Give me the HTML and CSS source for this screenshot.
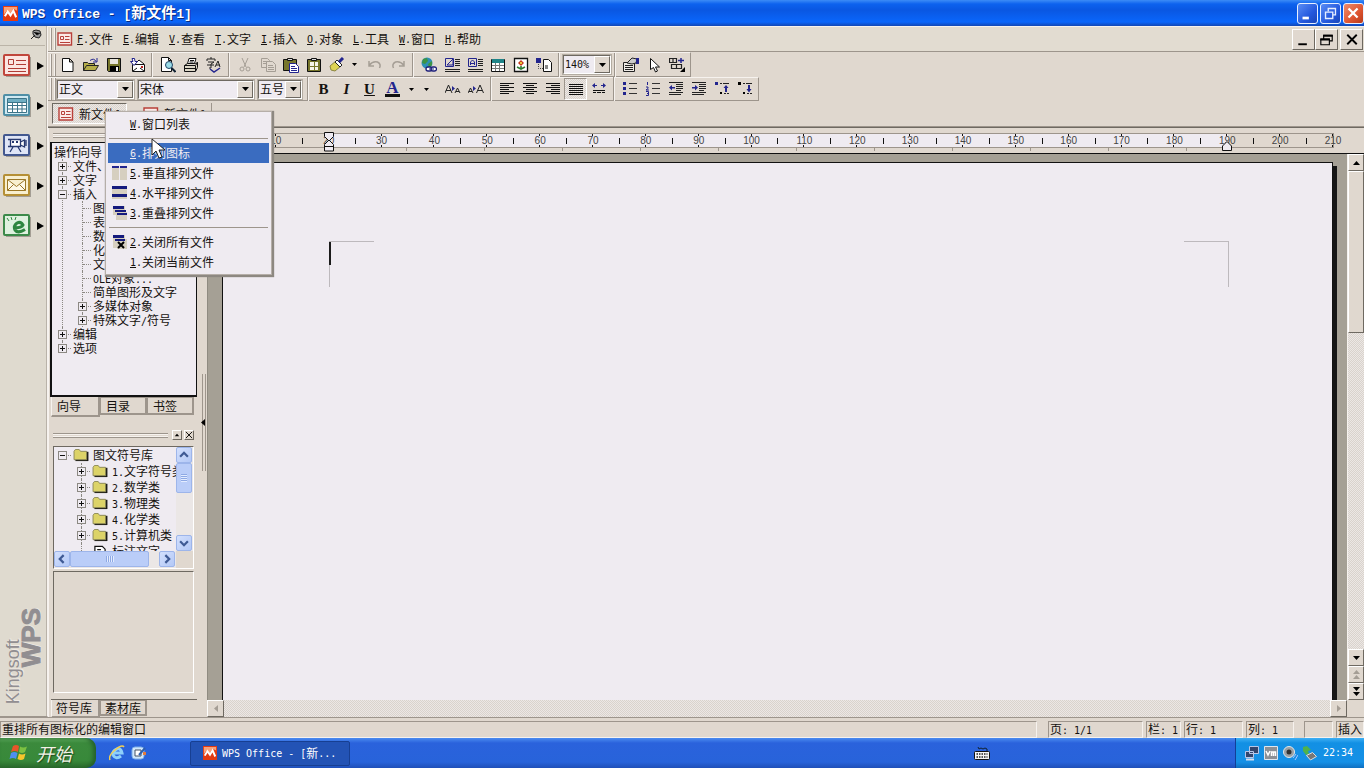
FILE: index.html
```html
<!DOCTYPE html>
<html lang="zh-CN">
<head>
<meta charset="utf-8">
<title>WPS Office - [新文件1]</title>
<link rel="stylesheet" href="styles.css">
</head>
<body>
<svg class="defs" aria-hidden="true">
  <symbol id="doc" viewBox="0 0 16 14"><path fill="#fbe9e6" stroke="#b8403a" stroke-width="1.4" d="M1 1h13.5v12H1z"/><path fill="none" stroke="#b8403a" d="M3.5 4.5h3v3h-3zM8 4.5h4.500M8 7.500h4.500M3 10.500h10"/></symbol>
  <symbol id="wps" viewBox="0 0 16 16"><path fill="#e33a12" d="M0 0h16v16H0z"/><path fill="#f9a27a" d="M1 1h14v4L11 3 7 9 4 5 1 9z"/><path fill="none" stroke="#fff" stroke-width="2.200" d="M2 11l3-5 3 4 3-5 3 7"/></symbol>
  <symbol id="down" viewBox="0 0 7 4"><path d="M0 0h7L3.500 4z"/></symbol>
  <symbol id="folder" viewBox="0 0 16 14"><path fill="#1a1a16" d="M2 3h14v10H2z"/><path fill="#dcd368" stroke="#8a8757" d="M.5 11.500v-9l1.500-2h4l1.500 2h6.500v9z"/></symbol>
  <symbol id="fly" viewBox="0 0 7 8"><path d="M0 0l7 4-7 4z"/></symbol>
</svg>

<header class="titlebar">
  <svg class="logo"><use href="#wps"/></svg>
  <h1><span class="la">WPS Office - [</span>新文件<span class="la">1]</span></h1>
  <div class="winbtns">
    <button aria-label="最小化"><svg viewBox="0 0 21 21"><path fill="#fff" d="M5 14h7v3H5z"/></svg></button>
    <button aria-label="还原"><svg viewBox="0 0 21 21"><path fill="none" stroke="#e6eeff" stroke-width="1.500" d="M8 8V5h8v7h-3M5 9h8v7H5z"/></svg></button>
    <button class="close" aria-label="关闭"><svg viewBox="0 0 21 21"><path stroke="#fff" stroke-width="2.500" d="M5 5l10 10M15 5L5 15"/></svg></button>
  </div>
</header>

<div class="shell">
  <aside class="rail">
    <button class="pin" aria-label="固定"><svg width="12" height="12" viewBox="0 0 12 12"><path fill="#999" stroke="#222" d="M3 2l3-1 4 1 1 4-2 3-4-1-2-3z"/><path stroke="#222" d="M5 6l-4 4M4 3l3 3 3-2"/></svg></button>
    <button class="railbtn" aria-label="文字"><svg viewBox="0 0 29 24"><path class="sh" d="M3 3h25v20H3z"/><rect x="1" y="1" width="25" height="20" rx="1" fill="#fbe6e2" stroke="#c0463c" stroke-width="2"/><path fill="none" stroke="#b03c36" d="M5.500 5.500h5v5h-5zM13 6.500h10M13 10.500h10M5 14.500h18M5 17.500h18"/></svg><svg class="fly"><use href="#fly"/></svg></button>
    <button class="railbtn" aria-label="表格"><svg viewBox="0 0 29 24"><path class="sh" d="M3 3h25v20H3z"/><rect x="1" y="1" width="25" height="20" rx="1" fill="#cfe9f2" stroke="#4f8fa6" stroke-width="2"/><path fill="#fff" stroke="#3c7488" d="M4.500 4.500h19v14h-19zM4 8.500h20M4 11.500h20M4 15h20M9.500 8v10M14.500 8v10M19 8v10"/><path fill="#6faec2" d="M5 5h18v3H5z"/></svg><svg class="fly"><use href="#fly"/></svg></button>
    <button class="railbtn" aria-label="演示"><svg viewBox="0 0 29 24"><path class="sh" d="M3 3h25v20H3z"/><rect x="1" y="1" width="25" height="20" rx="1" fill="#dfe5f6" stroke="#43588f" stroke-width="2"/><path fill="#fff" stroke="#27396f" stroke-width="1.300" d="M7.500 5.500h10v7h-10zM17.500 8l4-2v7l-4-2M10 13l-3 5M15 13l3 5M23 6v6M5 5.500h2M5 12.500h2"/><path fill="#27396f" d="M9 7h2v2H9zM13 7h2v2h-2z"/></svg><svg class="fly"><use href="#fly"/></svg></button>
    <button class="railbtn" aria-label="邮件"><svg viewBox="0 0 29 24"><path class="sh" d="M3 3h25v20H3z"/><rect x="1" y="1" width="25" height="20" rx="1" fill="#f8efcf" stroke="#b58f35" stroke-width="2"/><path fill="#fdf8e6" stroke="#9a7626" d="M4.500 5.500h18v11h-18zl9 7 9-7M4.500 16.500l6-6M22.500 16.500l-6-6"/></svg><svg class="fly"><use href="#fly"/></svg></button>
    <button class="railbtn" aria-label="浏览器"><svg viewBox="0 0 29 24"><path class="sh" d="M3 3h25v20H3z"/><rect x="1" y="1" width="25" height="20" rx="1" fill="#dff1df" stroke="#3c8a4a" stroke-width="2"/><path fill="none" stroke="#2e8640" stroke-width="3" d="M10 14q9 0 10-3-2-4-6-2-4 3-2 7 3 4 10-.500"/><path stroke="#2e8640" d="M4 4l2 3M8 3l1 3M13 3l-1 3"/></svg><svg class="fly"><use href="#fly"/></svg></button>
    <div class="brand"><span>Kingsoft</span><b>WPS</b></div>
  </aside>

  <div class="main">
    <nav class="menubar">
      <i class="grip"></i>
      <svg class="docicon"><use href="#doc"/></svg>
      <button><span class="l"><u>F</u>.</span>文件</button><button><span class="l"><u>E</u>.</span>编辑</button><button><span class="l"><u>V</u>.</span>查看</button><button><span class="l"><u>T</u>.</span>文字</button><button><span class="l"><u>I</u>.</span>插入</button><button><span class="l"><u>O</u>.</span>对象</button><button><span class="l"><u>L</u>.</span>工具</button><button><span class="l"><u>W</u>.</span>窗口</button><button><span class="l"><u>H</u>.</span>帮助</button>
      <div class="mdi">
        <button aria-label="最小化文档"><svg viewBox="0 0 20 20"><path d="M4 14h9v2H4z"/></svg></button><button aria-label="还原文档"><svg viewBox="0 0 20 20"><path fill="none" stroke="#000" stroke-width="1.200" d="M6.500 9V5.500h9v6H13M3.500 9.500h9v6h-9z"/><path d="M6 5h10v2H6zM3 9h10v2H3z"/></svg></button><button class="last" aria-label="关闭文档"><svg viewBox="0 0 20 20"><path stroke="#000" stroke-width="2" d="M5 5l10 10M15 5L5 15"/></svg></button>
      </div>
    </nav>

    <div class="bar">
      <i class="grip"></i>
      <button class="tb" aria-label="新建"><svg viewBox="0 0 16 16"><path fill="#fff" stroke="#111" d="M2.500 1.500h7l3.500 3.500v9.500H2.500zM9.500 1.500V5H13"/></svg></button>
      <button class="tb" aria-label="打开"><svg viewBox="0 0 16 16"><path fill="#b5ad48" stroke="#222" d="M.5 13.500v-8h4l1 1h6v2M.5 13.500l3-5h12l-3 5z"/><path fill="none" stroke="#23258e" d="M7 3.500q4-3 6 1M14 1v4h-4"/></svg></button>
      <button class="tb" aria-label="保存"><svg viewBox="0 0 16 16"><path fill="#77762b" stroke="#111" d="M1.500 1.500h13v13H2.500l-1-1z"/><path fill="#e8e4dc" d="M4 2h8v5H4z"/><path d="M4 9h9v5H4z"/><path fill="#eee" d="M10 10h2v4h-2z"/></svg></button>
      <button class="tb" aria-label="发送"><svg viewBox="0 0 16 16"><path fill="#fff" stroke="#111" d="M3.500 7.500h12v7h-12zM4 14l4-3M15 14l-4-3M6 7l4-4 5 4"/><path fill="#fff" stroke="#23258e" d="M3 1.500l1 3H1.500L5 8.500l3.500-4H6l-.500-3z"/><path fill="#b22" d="M12 9h2v2h-2z"/></svg></button>
      <i class="sep"></i>
      <button class="tb" aria-label="打印预览"><svg viewBox="0 0 16 16"><path fill="#fff" stroke="#111" d="M1.500.5h7l3 3v11h-10zM8.500.5v3h3"/><circle cx="9" cy="8" r="3.500" fill="#9adbe6" stroke="#246"/><path stroke="#123" stroke-width="2" d="M11.500 11l4 4"/></svg></button>
      <button class="tb" aria-label="打印"><svg viewBox="0 0 16 16"><path fill="#ddd8c8" stroke="#111" d="M1.500 8.500l3-2h8l2-1v5l-2 4h-11zM1.500 8.500h11l2-3M12.500 9v5"/><path fill="#fff" stroke="#111" d="M4.500 6.500l1.500-5h7l-1.500 5zM7 3.500h4M6.500 5h4"/><path stroke="#111" d="M2 11.500h10"/></svg></button>
      <button class="tb" aria-label="拼写检查"><svg viewBox="0 0 16 16"><path fill="none" stroke="#222" d="M1 4V2h8v2M5 0v2M2 5h6L5 7v4H3M1 8h7M9 10l3-6 2 6M10 8h4"/><path fill="none" stroke="#23258e" stroke-width="1.500" d="M4 12l4 3 6-4"/></svg></button>
      <i class="sep"></i>
      <button class="tb off" aria-label="剪切"><svg viewBox="0 0 16 16"><path fill="none" stroke="currentColor" d="M5 1l4 9M11 1L7 10"/><circle cx="5" cy="12" r="2" fill="none" stroke="currentColor"/><circle cx="11" cy="12" r="2" fill="none" stroke="currentColor"/></svg></button>
      <button class="tb off" aria-label="复制"><svg viewBox="0 0 16 16"><path fill="none" stroke="currentColor" d="M1.500 1.500h6l2 2v7h-8zM3 4.500h5M3 6.500h5"/><path fill="#e0d8cf" stroke="currentColor" d="M6.500 4.500h6l3 3v7h-9zM8 8.500h5M8 10.500h6M8 12.500h6"/></svg></button>
      <button class="tb" aria-label="粘贴"><svg viewBox="0 0 16 16"><path fill="#77762b" stroke="#111" d="M.5 2.500h13v11H.5z"/><path fill="#ddd" stroke="#111" d="M4.500 3.500v-2h5v2z"/><path fill="#fff" stroke="#23258e" d="M6.500 6.500h6l3 3v6h-9zM8 9.500h4M8 11.500h6M8 13.500h6"/></svg></button>
      <button class="tb" aria-label="选择性粘贴"><svg viewBox="0 0 16 16"><path fill="#77762b" stroke="#111" d="M1.500 2.500h13v12h-13z"/><path fill="#f6f3ea" d="M4 5h4v4H4zM9 5h3v4H9zM4 10h4v3H4zM9 10h3v3H9z"/><path fill="#ddd" stroke="#111" d="M5.500 1.500h5v2h-5z"/></svg></button>
      <button class="tb" aria-label="格式刷"><svg viewBox="0 0 16 16"><path fill="#ded354" stroke="#8a8440" d="M1 9l6-5 5 5-6 5-4-1z"/><path fill="#fff" stroke="#222" d="M6 5l2-2 5 5-2 2z"/><path stroke="#23258e" stroke-width="3" d="M10 5l4-4"/></svg></button>
      <button class="dd" aria-label="更多"><svg><use href="#down"/></svg></button>
      <button class="tb off gap" aria-label="撤销"><svg viewBox="0 0 16 16"><path fill="none" stroke="currentColor" stroke-width="1.500" d="M2 4v5h5M2.500 8q3-4 8-3 4 2 2 6"/></svg></button>
      <button class="tb off" aria-label="重做"><svg viewBox="0 0 16 16"><path fill="none" stroke="currentColor" stroke-width="1.500" d="M14 4v5H9M13.500 8q-3-4-8-3-4 2-2 6"/></svg></button>
      <i class="sep"></i>
      <button class="tb" aria-label="超链接"><svg viewBox="0 0 16 16"><circle cx="6" cy="6" r="5.500" fill="#2d8fb6"/><path fill="#3d9442" d="M2 2l4-1 1 3-3 3-3-1zM7 7l4-3v4l-3 3z"/><rect x="5" y="10" width="6" height="4" rx="2" fill="#fff" stroke="#1b1d78" stroke-width="1.300"/><rect x="10" y="10" width="5.500" height="4" rx="2" fill="#fff" stroke="#1b1d78" stroke-width="1.300"/><path stroke="#1b1d78" d="M8 12h5"/></svg></button>
      <button class="tb" aria-label="图文框"><svg viewBox="0 0 16 16"><path stroke="#222" d="M11 2.500h5M11 4.500h5M11 6.500h5M11 8.500h5M1 12.500h15M1 14.500h15"/><path fill="none" stroke="#23258e" d="M1.500 1.500h8v8h-8zM3 8l6-6v6z"/></svg></button>
      <button class="tb" aria-label="文字框"><svg viewBox="0 0 16 16"><path stroke="#222" d="M11 2.500h5M11 4.500h5M11 6.500h5M11 8.500h5M1 12.500h15M1 14.500h15"/><path fill="none" stroke="#23258e" d="M1.500 1.500h8v8h-8zM3.500 8V5l2-2 2 2v3M4 6.500h3"/></svg></button>
      <button class="tb" aria-label="插入表格"><svg viewBox="0 0 16 16"><path fill="#fff" stroke="#111" d="M1.500 2.500h13v12h-13z"/><path fill="#1f8488" d="M2 2h12v4H2z"/><path stroke="#777" d="M2 8.500h12M2 11.500h12M5.500 6v8M9.500 6v8"/></svg></button>
      <button class="tb" aria-label="插入图片"><svg viewBox="0 0 16 16"><path fill="#fff" stroke="#111" stroke-width="1.300" d="M1.500 1.500h13v13h-13z"/><path fill="#c53a1c" d="M8 3l3 3-3 3-3-3z"/><path stroke="#2f7c34" stroke-width="1.600" fill="none" d="M4 10l4 2 4-2M8 9v4"/><path fill="#e8c43a" d="M7 5h2v2H7z"/></svg></button>
      <button class="tb" aria-label="插入对象"><svg viewBox="0 0 16 16"><path fill="#23258e" d="M0 1h5v5H0z"/><path fill="#fff" stroke="#111" d="M7.500 2.500h5l3 3v9h-8z"/><path fill="none" stroke="#444" stroke-dasharray="1 1" d="M2.500 7v4.500H7"/><path fill="#888" d="M9 8h3v4H9z"/></svg></button>
      <i class="sep"></i>
      <label class="combo zoomsel"><select aria-label="显示比例"><option>140%</option></select><span><svg><use href="#down"/></svg></span></label>
      <i class="sep"></i>
      <button class="tb" aria-label="属性"><svg viewBox="0 0 16 16"><path fill="#efebe6" stroke="#222" d="M.5 5.500h11v9H.5zM2 8.500h8M2 10.500h8M2 12.500h8"/><path fill="#ccc" stroke="#222" d="M4 6l5-5 5 1-1 4-4 1z"/><path fill="#23258e" d="M13 1h3v6h-3z"/></svg></button>
      <button class="tb" aria-label="选择"><svg viewBox="0 0 16 16"><path fill="#fff" stroke="#111" d="M4.500 1.500v11l3-2 2 4.500 2-1-2-4h4z"/></svg></button>
      <button class="tb" aria-label="组合"><svg viewBox="0 0 16 16"><path fill="none" stroke="#222" stroke-width="1.200" d="M.5 1.500h7v4h-7zM2.500 7.500h10v4h-10zM4 1.500v4M7.500 7.500v4"/><path stroke="#23258e" stroke-width="1.500" d="M9 3.500h6M12 1v5"/><path d="M16 10v5h-5z"/></svg></button>
    </div>

    <div class="bar">
      <i class="grip"></i>
      <label class="combo style"><select aria-label="样式"><option>正文</option></select><span><svg><use href="#down"/></svg></span></label>
      <label class="combo font"><select aria-label="字体"><option>宋体</option></select><span><svg><use href="#down"/></svg></span></label>
      <label class="combo size"><select aria-label="字号"><option>五号</option></select><span><svg><use href="#down"/></svg></span></label>
      <i class="sep"></i>
      <button class="tb glyph"><b>B</b></button>
      <button class="tb glyph"><b><em>I</em></b></button>
      <button class="tb glyph"><b><u>U</u></b></button>
      <button class="tb glyph ink"><b>A</b></button>
      <button class="dd wide" aria-label="字体颜色"><svg><use href="#down"/></svg></button>
      <button class="dd wide" aria-label="更多格式"><svg><use href="#down"/></svg></button>
      <button class="tb gap2" aria-label="缩小字体"><svg viewBox="0 0 16 16"><path fill="none" stroke="#222" d="M0 12l3.500-8L7 12M1 9.500h5M10 12l2.500-5 2.500 5M11 10.500h3"/><path fill="#23258e" d="M7 5l3 2.500L7 10z"/></svg></button>
      <button class="tb" aria-label="放大字体"><svg viewBox="0 0 16 16"><path fill="none" stroke="#222" d="M0 12l2.500-5L5 12M1 10.500h3M8.500 12L12 4l3.500 8M10 9.500h4"/><path fill="#23258e" d="M5 5l3 2.500L5 10z"/></svg></button>
      <i class="sep"></i>
      <button class="tb" aria-label="左对齐"><svg viewBox="0 0 16 16"><path stroke="#111" d="M1 2.500h14M1 4.500h9M1 6.500h14M1 8.500h9M1 10.500h14M1 12.500h9"/></svg></button>
      <button class="tb" aria-label="居中"><svg viewBox="0 0 16 16"><path stroke="#111" d="M1 2.500h14M4 4.500h8M1 6.500h14M4 8.500h8M1 10.500h14M4 12.500h8"/></svg></button>
      <button class="tb" aria-label="右对齐"><svg viewBox="0 0 16 16"><path stroke="#111" d="M1 2.500h14M6 4.500h9M1 6.500h14M6 8.500h9M1 10.500h14M6 12.500h9"/></svg></button>
      <button class="tb pressed" aria-label="两端对齐"><svg viewBox="0 0 16 16"><path stroke="#111" d="M1 3.500h14M1 5.500h14M1 7.500h14M1 9.500h14M1 11.500h14M1 13.500h14"/></svg></button>
      <button class="tb" aria-label="分散对齐"><svg viewBox="0 0 16 16"><path stroke="#111" d="M2 9.500h12M2 11.500h3M6 11.500h4M11 11.500h3"/><path fill="#23258e" d="M1 4.500L4 2v2h2v1H4v2zM15 4.500L12 2v2h-2v1h2v2z"/></svg></button>
      <i class="sep"></i>
      <button class="tb" aria-label="项目符号"><svg viewBox="0 0 16 16"><path fill="#23258e" d="M1 1h3v3H1zM1 6h3v3H1zM1 11h3v3H1z"/><path stroke="#333" d="M7 2.500h8M7 7.500h8M7 12.500h8"/></svg></button>
      <button class="tb" aria-label="编号"><svg viewBox="0 0 16 16"><path fill="none" stroke="#23258e" d="M2.500 1v3M1 6h2v1.500L1 9h3M1 10.500h2.500v4H1M2 12.500h1"/><path stroke="#333" d="M7 2.500h8M7 7.500h8M7 12.500h8"/></svg></button>
      <button class="tb" aria-label="减少缩进"><svg viewBox="0 0 16 16"><path stroke="#222" d="M1 1.500h14M8 3.500h7M8 5.500h7M8 7.500h7M8 9.500h5M1 11.500h14M1 13.500h12"/><path fill="#23258e" d="M1 6.500L4 4v2h3v1.500H4v2z"/></svg></button>
      <button class="tb" aria-label="增加缩进"><svg viewBox="0 0 16 16"><path stroke="#222" d="M1 1.500h14M8 3.500h7M8 5.500h7M8 7.500h7M8 9.500h5M1 11.500h14M1 13.500h12"/><path fill="#23258e" d="M7 6.500L4 4v2H1v1.500h3v2z"/></svg></button>
      <button class="tb" aria-label="升级"><svg viewBox="0 0 16 16"><path fill="#23258e" d="M1 1h3v3H1zM12 4l2.500 3H13v4h-2V7H9.500z"/><path stroke="#222" d="M6 2.500h9M10 12.500h5" stroke-dasharray="2 1 9"/><path d="M6 11h2v2H6z"/></svg></button>
      <button class="tb" aria-label="降级"><svg viewBox="0 0 16 16"><path d="M1 1h3v3H1zM6 11h2v2H6z"/><path fill="#23258e" d="M12 11.500L14.500 8H13V4h-2v4H9.500z"/><path stroke="#222" d="M6 2.500h9M10 12.500h5" stroke-dasharray="2 1 9"/></svg></button>
    </div>

    <div class="doctabs">
      <button class="doctab on"><svg class="docicon"><use href="#doc"/></svg>新文件<span class="l">1</span></button>
      <button class="doctab"><svg class="docicon"><use href="#doc"/></svg>新文件<span class="l">1</span></button>
      <div class="popup" role="menu">
        <button role="menuitem"><i></i><span class="l"><u>W</u>.</span>窗口列表</button>
        <hr>
        <button role="menuitem" class="hot"><i></i><span class="l"><u>6</u>.</span>排列图标</button>
        <button role="menuitem"><i><svg viewBox="0 0 16 16"><path fill="#d6cfc0" d="M0 1h7v14H0zM8 1h7v14H8z"/><path fill="#23258e" d="M0 1h7v2H0zM8 1h7v2H8z"/></svg></i><span class="l"><u>5</u>.</span>垂直排列文件</button>
        <button role="menuitem"><i><svg viewBox="0 0 16 16"><path fill="#d6cfc0" d="M0 1h15v13H0z"/><path fill="#151b7e" d="M0 1h15v3H0zM0 9h15v3H0z"/></svg></i><span class="l"><u>4</u>.</span>水平排列文件</button>
        <button role="menuitem"><i><svg viewBox="0 0 16 16"><path fill="#d6cfc0" d="M1 1h12v9H1zM4 7h11v8H4z"/><path fill="#151b7e" d="M1 1h11v3H1zM3 5h11v2H3zM5 8h10v2H5z"/></svg></i><span class="l"><u>3</u>.</span>重叠排列文件</button>
        <hr>
        <button role="menuitem"><i><svg viewBox="0 0 16 16"><path fill="#d6cfc0" d="M1 1h12v13H1zM5 5h10v10H5z"/><path fill="#151b7e" d="M1 1h11v3H1zM3 5h10v2H3z"/><path stroke="#000" stroke-width="2" d="M6 8l6 6M12 8l-6 6"/></svg></i><span class="l"><u>2</u>.</span>关闭所有文件</button>
        <button role="menuitem"><i></i><span class="l"><u>1</u>.</span>关闭当前文件</button>
        <svg class="cursor" viewBox="0 0 14 22"><path fill="#fff" stroke="#222" d="M1 1v16l4-4 3 7 3-1-3-7h6z"/></svg>
      </div>
    </div>

    <div class="work">
      <section class="side">
        <div class="ridge"></div>
        <div class="guide">
          <h2>操作向导</h2>
          <ul class="tree">
            <li><i class="pm"></i>文件、</li>
            <li><i class="pm"></i>文字</li>
            <li><i class="pm open"></i>插入
              <ul>
                <li class="leaf">图</li><li class="leaf">表</li><li class="leaf">数</li><li class="leaf">化</li><li class="leaf">文</li>
                <li class="leaf"><span class="l">OLE</span>对象<span class="l">...</span></li>
                <li class="leaf">简单图形及文字</li>
                <li><i class="pm"></i>多媒体对象</li>
                <li><i class="pm"></i>特殊文字<span class="l">/</span>符号</li>
              </ul>
            </li>
            <li><i class="pm"></i>编辑</li>
            <li><i class="pm"></i>选项</li>
          </ul>
        </div>
        <div class="tabs"><button class="on">向导</button><button>目录</button><button>书签</button></div>
        <div class="panelhead"><div class="ridge"></div><button aria-label="收起"><svg viewBox="0 0 9 9"><path d="M2 6h5L4.500 3z"/></svg></button><button aria-label="关闭面板"><svg viewBox="0 0 9 9"><path stroke="#000" d="M1 1l7 7M8 1L1 8"/></svg></button></div>
        <div class="library">
          <ul class="tree big">
            <li><i class="pm open"></i><svg><use href="#folder"/></svg>图文符号库
              <ul>
                <li><i class="pm"></i><svg><use href="#folder"/></svg><span class="l">1.</span>文字符号类</li>
                <li><i class="pm"></i><svg><use href="#folder"/></svg><span class="l">2.</span>数学类</li>
                <li><i class="pm"></i><svg><use href="#folder"/></svg><span class="l">3.</span>物理类</li>
                <li><i class="pm"></i><svg><use href="#folder"/></svg><span class="l">4.</span>化学类</li>
                <li><i class="pm"></i><svg><use href="#folder"/></svg><span class="l">5.</span>计算机类</li>
                <li class="page-item"><svg viewBox="0 0 16 14"><path fill="#fff" stroke="#111" stroke-width="1.300" d="M2.500 1.500h8l3 3V14h-11zM5 5h4M5 8h6"/></svg>标注文字</li>
              </ul>
            </li>
          </ul>
          <div class="xpv"><button aria-label="向上"><svg viewBox="0 0 9 9"><path d="M1 6l3.500-3.500L8 6"/></svg></button><span class="thumb"></span><i></i><button aria-label="向下"><svg viewBox="0 0 9 9"><path d="M1 3l3.500 3.500L8 3"/></svg></button></div>
          <div class="xph"><button aria-label="向左"><svg viewBox="0 0 9 9"><path d="M6 1L2.500 4.500 6 8"/></svg></button><span class="thumb"></span><i></i><button aria-label="向右"><svg viewBox="0 0 9 9"><path d="M3 1l3.500 3.500L3 8"/></svg></button></div>
        </div>
        <div class="preview"></div>
        <div class="tabs low"><button class="on">符号库</button><button>素材库</button></div>
      </section>
      <div class="splitter"><span><svg viewBox="0 0 4 7"><path d="M4 0v7L0 3.500z"/></svg></span></div>

      <section class="editor">
        <div class="rulerbox">
          <ol class="ruler">
            <li><span>10</span></li><li class="in"><span>20</span><svg class="mark" viewBox="0 0 10 22"><path fill="#efebf1" stroke="#111" d="M.5 1.500v4L5 10l4.500-4.500v-4zM5 9L.5 13.500V20h9v-6.500zM.5 15.500h9"/></svg></li><li><span>30</span></li><li><span>40</span></li><li><span>50</span></li><li><span>60</span></li><li><span>70</span></li><li><span>80</span></li><li><span>90</span></li><li><span>100</span></li><li><span>110</span></li><li><span>120</span></li><li><span>130</span></li><li><span>140</span></li><li><span>150</span></li><li><span>160</span></li><li><span>170</span></li><li><span>180</span></li><li><span>190</span><svg class="mark" viewBox="0 0 10 22"><path fill="#efebf1" stroke="#111" d="M5 10.500L.5 15v4.500h9V15z"/></svg></li><li><span>200</span></li><li><span>210</span></li>
          </ol>
          <div class="stops"></div>
        </div>
        <div class="canvas">
          <div class="sheet"><div class="corner tl"><span class="caret"></span></div><div class="corner tr"></div></div>
        </div>
        <div class="vscroll">
          <button aria-label="上滚"><svg viewBox="0 0 7 4"><path d="M0 4h7L3.500 0z"/></svg></button><span class="thumb"></span><i></i>
          <button aria-label="下滚"><svg viewBox="0 0 7 4"><path d="M0 0h7L3.500 4z"/></svg></button>
          <button class="off" aria-label="上一页"><svg class="dbl" viewBox="0 0 7 9"><path d="M0 4h7L3.500 0zM0 9h7L3.500 5z"/></svg></button>
          <button aria-label="下一页"><svg class="dbl" viewBox="0 0 7 9"><path d="M0 0h7L3.500 4zM0 5h7L3.500 9z"/></svg></button>
        </div>
        <div class="hscroll"><button aria-label="左滚"><svg viewBox="0 0 4 7"><path d="M4 0v7L0 3.500z"/></svg></button><button aria-label="右滚"><svg viewBox="0 0 4 7"><path d="M0 0v7l4-3.500z"/></svg></button></div>
      </section>
    </div>
  </div>
</div>

<footer class="status">
  <span class="msg">重排所有图标化的编辑窗口</span>
  <span class="s1">页<span class="l">: 1/1</span></span><span class="s2">栏<span class="l">: 1</span></span><span class="s3">行<span class="l">: 1</span></span><span class="s4">列<span class="l">: 1</span></span><span class="s5"></span><span class="s6">插入</span>
</footer>

<div class="taskbar">
  <button class="start"><svg viewBox="0 0 20 20"><path fill="#e8562a" d="M4 3q3-2 6 0L9 9Q6 7 2 9z"/><path fill="#7cc142" d="M11 3.500q3 2 7 0L16 9q-3 2-6 0z"/><path fill="#4f8ff0" d="M2 10q3-2 6.500 0L7 16q-3-2-6.500 0z"/><path fill="#f6c62c" d="M10 10.500q3 2 6.500 0L15 16q-3 2-6.500 0z"/></svg>开始</button>
  <div class="quick">
    <a href="#" aria-label="Internet Explorer"><svg viewBox="0 0 16 16"><path fill="none" stroke="#8ed0fa" stroke-width="3" d="M4 8h9q-1-5-5-4-5 2-4 6 3 5 8 1"/><path fill="none" stroke="#f1cf55" stroke-width="1.500" d="M1 15Q-1 11 6 5t9-3"/></svg></a>
    <a href="#" aria-label="显示桌面"><svg viewBox="0 0 16 16"><rect x="1" y="2" width="12" height="12" rx="3" fill="#cfe6fb" stroke="#7fb0e8"/><path fill="#fff" stroke="#456" d="M4 5h6v6H4z"/><path stroke="#2d5fae" stroke-width="2" d="M8 10l6-7"/><path fill="#e37b3c" d="M12 7h3v3h-3z"/></svg></a>
  </div>
  <button class="task"><svg><use href="#wps"/></svg><span class="l">WPS Office - [</span>新<span class="l">...</span></button>
  <svg class="kbd" viewBox="0 0 16 14"><path fill="none" stroke="#123" d="M4 1l1 2 2-1 2 1 2-1 2 1v2"/><rect x=".5" y="5.500" width="15" height="8" rx="1" fill="#f4f4f4" stroke="#111"/><path stroke="#222" stroke-width="1.500" stroke-dasharray="1.500 1" d="M2.500 8h11M2.500 11h11"/></svg>
  <div class="tray">
    <svg viewBox="0 0 16 16"><path fill="#33456d" stroke="#b7c6e8" d="M5.500 1.500h9v7h-9zM1.500 6.500h8v6h-8z"/><path stroke="#d6dcec" stroke-width="2" d="M2 14.500h8"/></svg>
    <svg viewBox="0 0 16 16"><path fill="#8c9096" stroke="#dfe6ee" d="M1.500 1.500h13v13h-13z"/><path fill="none" stroke="#fff" stroke-width="1.500" d="M3 6l2 4 2-4M8.500 11V7h4v4M10.500 7v4"/></svg>
    <svg viewBox="0 0 16 16"><circle cx="7" cy="7" r="5.500" fill="#9aa0a4" stroke="#e4e8ea"/><circle cx="7" cy="7" r="2.500" fill="#333"/><path fill="none" stroke="#a9c5ff" d="M11 13l3-4M13 15l3-5"/></svg>
    <svg viewBox="0 0 16 16"><path fill="#4fb24b" d="M2 2l4-1 4 4-3 1 1 3-3 1-3-4z"/><path fill="#777" stroke="#ddd" d="M5.500 10.500l6-3 4 4-6 3.500z"/></svg>
    <time class="l">22:34</time>
  </div>
</div>
</body>
</html>
```

FILE: styles.css
```css
:root {
  --face: #e0d8cf;
  --lite: #f6f2ee;
  --dark: #9d958c;
  --deep: #6e6961;
  --paper: #efebf1;
  --canvas: #a5a095;
  --dither: repeating-conic-gradient(#d9d3cc 0 25%, #ece7e5 0 50%) 0 0 / 2px 2px;
}
* { box-sizing: border-box; }
body {
  margin: 0;
  height: 100vh;
  display: flex;
  flex-direction: column;
  overflow: hidden;
  background: var(--face);
  color: #15120f;
  font: 12px/14px "Noto Sans CJK SC", sans-serif;
}
button, select { font: inherit; color: inherit; background: none; border: 0; padding: 0; margin: 0; }
button { display: flex; align-items: center; white-space: nowrap; }
svg { display: block; flex: none; }
ul, ol { list-style: none; margin: 0; padding: 0; }
i { font-style: normal; }
.defs { position: absolute; width: 0; height: 0; }
.l { font: 10px/10px "DejaVu Sans Mono", monospace; white-space: pre; }
button > .l { padding-top: 2px; }

/* title bar */
.titlebar {
  flex: none;
  height: 26px;
  display: flex;
  align-items: center;
  padding: 0 0 0 3px;
  background: linear-gradient(#3c8cf6, #0d62ee 4px, #0a57e2 10px, #0a66fb 22px, #1347b4);
}
.logo { width: 15px; height: 15px; }
.titlebar h1 {
  margin: 0 0 0 4px;
  font-size: 15px;
  line-height: 20px;
  font-weight: bold;
  color: #fff;
  text-shadow: 1px 1px #0a2a80;
  white-space: pre;
}
.la { font-family: "Liberation Mono", monospace; font-size: 13px; }
.winbtns { display: flex; gap: 2px; margin-left: auto; }
.winbtns button {
  width: 21px;
  height: 21px;
  border: 1px solid #e8f0ff;
  border-radius: 3px;
  background: linear-gradient(135deg, #5a8df5, #2458dd 60%, #1a46b8);
}
.winbtns .close { background: linear-gradient(135deg, #ee8c6c, #de5430 60%, #b83a18); }
.winbtns svg { width: 19px; height: 19px; }

.shell { flex: 1; min-height: 0; display: flex; }

/* launcher rail */
.rail {
  width: 48px;
  flex: none;
  display: flex;
  flex-direction: column;
  background: #dfdacf;
  border-right: 1px solid var(--lite);
  border-bottom: 1px solid var(--dark);
  box-shadow: inset -1px 0 #b9b2a8;
}
.pin { height: 20px; flex: none; justify-content: flex-end; margin-right: 2px; padding: 0 3px 2px 0; border-bottom: 1px solid #bbb4a8; }
.railbtn { height: 40px; flex: none; padding: 0 0 0 3px; gap: 5px; }
.railbtn svg { width: 29px; height: 24px; }
.railbtn .fly { width: 7px; height: 8px; }
.sh { fill: #a39d93; }
.brand {
  margin: auto 4px 12px;
  writing-mode: vertical-rl;
  transform: rotate(180deg);
  display: flex;
  flex-direction: column;
  color: #918e91;
  font-family: "Liberation Sans", sans-serif;
  text-shadow: 1px 1px #efeae4;
}
.brand span { font-size: 18px; line-height: 18px; }
.brand b { font-size: 26px; line-height: 18px; padding-top: 37px; -webkit-text-stroke: 1px; }

.main { flex: 1; min-width: 0; display: flex; flex-direction: column; }

/* bars */
.menubar, .bar {
  flex: none;
  display: flex;
  align-items: center;
  padding-left: 2px;
  border-top: 1px solid var(--lite);
  border-bottom: 1px solid var(--dark);
}
.menubar { height: 26px; background: #e2dcd1; }
.menubar > button { width: 46px; padding-right: 10px; }
.grip {
  width: 6px;
  height: 22px;
  flex: none;
  border-left: 1px solid var(--lite);
  border-right: 1px solid var(--dark);
  background: linear-gradient(90deg, var(--dark) 1px, transparent 1px 3px, var(--lite) 3px 4px);
}
.docicon { width: 16px; height: 14px; }
.menubar .docicon { margin: 0 4px 0 1px; }
.mdi { display: flex; margin-left: auto; padding-right: 1px; }
.mdi button, .vscroll button, .hscroll button, .panelhead button, .combo span {
  justify-content: center;
  background: var(--face);
  border: 1px solid;
  border-color: #fff var(--deep) var(--deep) #fff;
}
.mdi button { width: 23px; height: 21px; }
.mdi .last { margin-left: 2px; }
.mdi svg { width: 20px; height: 19px; }
.bar { height: 25px; align-self: flex-start; border-right: 1px solid var(--dark); padding-right: 2px; }
.bar + .bar { height: 24px; }
.tb { width: 23px; height: 22px; justify-content: center; flex: none; }
.tb svg { width: 16px; height: 16px; }
.off { color: #a59e95; }
.off svg { fill: #a59e95; }
.dd { width: 12px; height: 22px; justify-content: center; }
.dd.wide { width: 15px; }
.dd svg, .combo svg { width: 7px; height: 4px; }
.dd svg { width: 5px; height: 3px; }
.gap { margin-left: 3px; }
.gap2 { margin-left: 7px; }
.sep { width: 2px; height: 24px; margin: 0 3px; flex: none; border-left: 1px solid var(--dark); border-right: 1px solid var(--lite); }
.glyph { font: 15px/16px "Liberation Serif", serif; }
.ink b { color: #23258e; font-size: 17px; line-height: 13px; border-bottom: 3px solid #111; padding: 0 1px; }
.pressed { border: 1px solid; border-color: var(--dark) #fff #fff var(--dark); background: var(--dither); }
.combo {
  display: flex;
  height: 19px;
  margin: 0 1px;
  background: var(--paper);
  border: 1px solid;
  border-color: var(--deep) #fff #fff var(--deep);
  box-shadow: 0 0 0 1px #b3aca2;
}
.combo select { flex: 1; min-width: 0; appearance: none; padding-left: 1px; line-height: 16px; }
.combo span { width: 16px; display: flex; align-items: center; }
.style { width: 77px; margin-right: 3px; }
.font { width: 116px; margin-right: 3px; }
.size { width: 44px; margin-right: 2px; }
.zoomsel { width: 48px; margin: 0; }
.zoomsel select { font: 10px/16px "DejaVu Sans Mono", monospace; }

/* document tabs */
.doctabs {
  flex: none;
  position: relative;
  height: 26px;
  display: flex;
  align-items: center;
  padding-left: 4px;
  border-bottom: 1px solid var(--dark);
}
.doctab { height: 21px; gap: 5px; padding: 0 5px 0 10px; margin-right: 5px; border: 1px solid transparent; border-width: 0 1px; border-color: transparent var(--dark) transparent transparent; }
.doctab .l { margin-left: -5px; }
.doctab.on { padding: 0 5px; background: var(--dither); border: 1px solid; border-color: var(--deep) #fff #fff var(--deep); }

/* window popup menu */
.popup {
  position: absolute;
  z-index: 5;
  left: 57px;
  top: 10px;
  width: 167px;
  padding: 2px;
  background: var(--paper);
  border: 1px solid #b5aea8;
  box-shadow: 1px 1px 1px 1px #8d8881;
}
.popup button { width: 100%; height: 20px; padding-left: 4px; }
.popup button i { width: 18px; flex: none; }
.popup button svg { width: 16px; height: 16px; }
.popup .hot { background: #3a6cc0; color: #efebf1; }
.popup hr { height: 1px; margin: 4px 1px; border: 0; background: var(--dark); }
.cursor { position: absolute; left: 45px; top: 26px; width: 14px; height: 22px; }

/* work area */
.work { flex: 1; min-height: 0; display: flex; border-top: 1px solid var(--deep); }
.side { width: 153px; flex: none; padding: 5px 4px 0 2px; display: flex; flex-direction: column; border-left: 1px solid var(--lite); }
.ridge { height: 5px; margin: 0 6px 0 2px; flex: none; border: solid var(--dark); border-width: 1px 0; background: linear-gradient(var(--lite) 1px, transparent 1px 2px, var(--lite) 2px); }
.guide {
  height: 255px;
  flex: none;
  margin: 4px 0 0 -1px;
  padding: 2px 1px;
  background: var(--paper);
  border: 1px solid #111;
  border-width: 1px 1px 2px 2px;
}
.guide h2 { margin: 0; font: inherit; padding-left: 1px; }
.tree { line-height: 14px; white-space: nowrap; }
.tree li { position: relative; padding-left: 20px; }
.tree .pm {
  position: absolute;
  z-index: 1;
  left: 5px;
  top: 3px;
  width: 9px;
  height: 9px;
  border: 1px solid #8c8983;
  background: linear-gradient(#111, #111) 1px 3px / 5px 1px no-repeat, linear-gradient(#111, #111) 3px 1px / 1px 5px no-repeat, var(--paper);
}
.tree .pm.open { background: linear-gradient(#111, #111) 1px 3px / 5px 1px no-repeat, var(--paper); }
/* dotted connectors: a horizontal arm and a vertical stem for each row */
.tree li::before { content: ""; position: absolute; left: 10px; top: 7px; width: 8px; border-top: 1px dotted #8c8983; }
.tree li::after { content: ""; position: absolute; left: 9px; top: 0; bottom: 0; border-left: 1px dotted #8c8983; }
.tree > li:last-child::after { bottom: auto; height: 8px; }
.tabs { display: flex; flex: none; align-items: flex-start; height: 20px; }
.tabs button { width: 47px; height: 18px; padding: 0 0 0 5px; border: solid var(--dark); border-width: 1px 2px 2px 1px; }
.tabs .on { width: 49px; height: 20px; border-color: var(--lite) var(--dark) var(--dark) var(--lite); border-top: 0; }
.panelhead { display: flex; align-items: center; margin: 12px 3px 5px 0; height: 12px; gap: 2px; }
.panelhead .ridge { flex: 1; margin-right: 2px; }
.panelhead button { width: 10px; height: 10px; }
.panelhead svg { width: 8px; height: 8px; }
.library {
  height: 123px;
  flex: none;
  margin: 0 3px 0 2px;
  display: grid;
  grid-template: 1fr 17px / 1fr 17px;
  border: 1px solid;
  border-color: var(--deep) #fff #fff var(--deep);
}
.big { overflow: hidden; line-height: 16px; background: var(--paper); min-width: 0; min-height: 0; }
.big li { padding-left: 19px; }
.big .pm { left: 4px; top: 4px; }
.big li::before { left: 9px; top: 8px; }
.big li::after { left: 8px; }
.big > li::after { display: none; }
.big svg { display: inline-block; vertical-align: -2px; width: 16px; height: 13px; margin-right: 4px; }
.big .pm.open ~ ul li { height: 16px; }
.xpv, .xph { display: flex; background: #ebe7e6; }
.xpv { flex-direction: column; }
.xpv i, .xph i { flex: 1; }
.xpv button, .xph button, .xpv .thumb, .xph .thumb {
  width: 16px;
  height: 16px;
  justify-content: center;
  border: 1px solid #9db5ea;
  border-radius: 2px;
  background: linear-gradient(135deg, #d3e0fd, #b3c8f6);
}
.xpv .thumb { height: 30px; background: repeating-linear-gradient(#8ea9e4 0 1px, #e3ecff 1px 2px) center / 6px 8px no-repeat, #bacdf8; }
.xph .thumb { width: 79px; background: repeating-linear-gradient(90deg, #8ea9e4 0 1px, #e3ecff 1px 2px) center / 8px 6px no-repeat, #bacdf8; }
.xph { padding-right: 1px; }
.xpv svg, .xph svg { width: 10px; height: 10px; fill: none; stroke: #3f5a94; stroke-width: 2; }
.preview { flex: 1; margin: 2px 3px 6px 2px; border: 1px solid; border-color: var(--deep) #fff #fff var(--deep); }
.tabs.low { height: 18px; border-top: 1px solid var(--deep); }
.tabs.low button { height: 16px; padding-left: 4px; }
.tabs.low .on { height: 18px; }
.splitter { width: 6px; flex: none; padding-top: 246px; }
.splitter span {
  display: flex;
  align-items: center;
  justify-content: flex-end;
  width: 4px;
  height: 97px;
  margin-left: 1px;
  border: solid var(--dark);
  border-width: 0 1px;
}
.splitter svg { width: 4px; height: 7px; }

/* editor */
.editor { flex: 1; min-width: 0; display: grid; grid-template: 26px 1fr 17px / 1fr 17px; }
.rulerbox { grid-column: 1 / -1; padding: 5px 30px 0 16px; border-bottom: 1px solid #111; }
.ruler {
  display: grid;
  grid-template-columns: repeat(21, 1fr);
  height: 15px;
  border: solid var(--dark);
  border-width: 1px 1px 1px 0;
  background: linear-gradient(90deg, var(--face) 9.6%, var(--paper) 9.6% 90.5%, var(--face) 90.5%);
  font: 10px/13px "Liberation Sans", sans-serif;
  color: #444;
}
.ruler li {
  position: relative;
  display: flex;
  justify-content: flex-end;
  background:
    linear-gradient(#111, #111) center / 1px 6px no-repeat,
    linear-gradient(#111, #111) right top / 1px 2px no-repeat,
    linear-gradient(#111, #111) right bottom / 1px 2px no-repeat;
}
.ruler span { width: 0; display: flex; justify-content: center; }
.mark { position: absolute; right: -5px; top: -3px; width: 10px; height: 22px; }
.stops { height: 3px; margin: 0 9.500% 0 9.500%; background: repeating-linear-gradient(90deg, transparent 0 77px, var(--dark) 77px 78px); }
.canvas { padding: 8px 14px 0 15px; background: linear-gradient(90deg, #8f8b81 1px, var(--canvas) 1px); display: flex; overflow: hidden; }
.sheet {
  flex: 1;
  display: flex;
  justify-content: space-between;
  padding: 78px 9.300% 0 9.500%;
  background: var(--paper);
  border: solid #111;
  border-width: 1px 1px 0 1px;
  box-shadow: 4px 4px #151515;
}
.corner { width: 45px; height: 46px; border-top: 1px solid #bdb9bd; }
.tl { border-left: 1px solid #bdb9bd; }
.tr { border-right: 1px solid #bdb9bd; }
.caret { display: block; width: 2px; height: 23px; margin-left: -1px; background: #1b1b1b; }
.vscroll { display: flex; flex-direction: column; background: var(--dither); border-left: 1px solid var(--lite); }
.vscroll button { width: 16px; height: 17px; flex: none; }
.vscroll svg { width: 7px; height: 4px; }
.vscroll .dbl { height: 9px; }
.vscroll .thumb { height: 162px; flex: none; background: var(--face); border: 1px solid; border-color: #fff var(--deep) var(--deep) #fff; }
.vscroll i { flex: 1; }
.hscroll { display: flex; justify-content: space-between; background: var(--dither); }
.hscroll button { width: 17px; height: 17px; }
.hscroll svg { width: 4px; height: 7px; fill: #a59e95; }

/* status bar */
.status { flex: none; height: 21px; display: flex; gap: 3px; padding-top: 3px; border-top: 1px solid var(--dark); white-space: nowrap; }
.status > span { height: 17px; padding-left: 1px; line-height: 14px; border: 1px solid; border-color: var(--dark) var(--lite) var(--lite) var(--dark); }
.msg { flex: 1; margin-right: 8px; }
.s1 { width: 95px; }
.s2 { width: 35px; }
.s3 { width: 59px; }
.s4 { width: 48px; }
.s5 { width: 29px; margin-left: 7px; }
.s6 { width: 28px; }

/* taskbar */
.taskbar { flex: none; height: 30px; display: flex; align-items: center; background: linear-gradient(#4b8cf0, #2a62dc 5px, #2863da 24px, #1f4fb8); color: #fff; }
.start {
  align-self: stretch;
  width: 96px;
  padding-left: 9px;
  gap: 7px;
  font-size: 18px;
  font-style: italic;
  color: #f2f2e6;
  text-shadow: 1px 1px 1px #1d4a1c;
  border-radius: 0 10px 10px 0;
  background: linear-gradient(#5fae5f, #3b8a3c 5px, #38893a 22px, #2b6c2c);
  box-shadow: inset -3px 0 4px #24602a;
}
.start svg { width: 20px; height: 20px; }
.quick { display: flex; gap: 6px; margin: 0 43px 0 13px; }
.quick svg { width: 16px; height: 16px; }
.task { width: 160px; height: 25px; padding-left: 12px; border: 1px solid #173f92; border-radius: 2px; background: #2353b5; }
.task svg { width: 14px; height: 14px; margin-right: 5px; }
.kbd { width: 16px; height: 14px; margin: 0 auto 0 624px; }
.tray { align-self: stretch; margin-left: auto; padding: 0 11px 0 8px; display: flex; align-items: center; gap: 3px; border-left: 1px solid #123f97; background: linear-gradient(#3fb0f4, #1290e4 5px, #1590e6 24px, #0f6fc0); }
.tray svg { width: 16px; height: 16px; }
.tray time { margin-left: 3px; }
```
